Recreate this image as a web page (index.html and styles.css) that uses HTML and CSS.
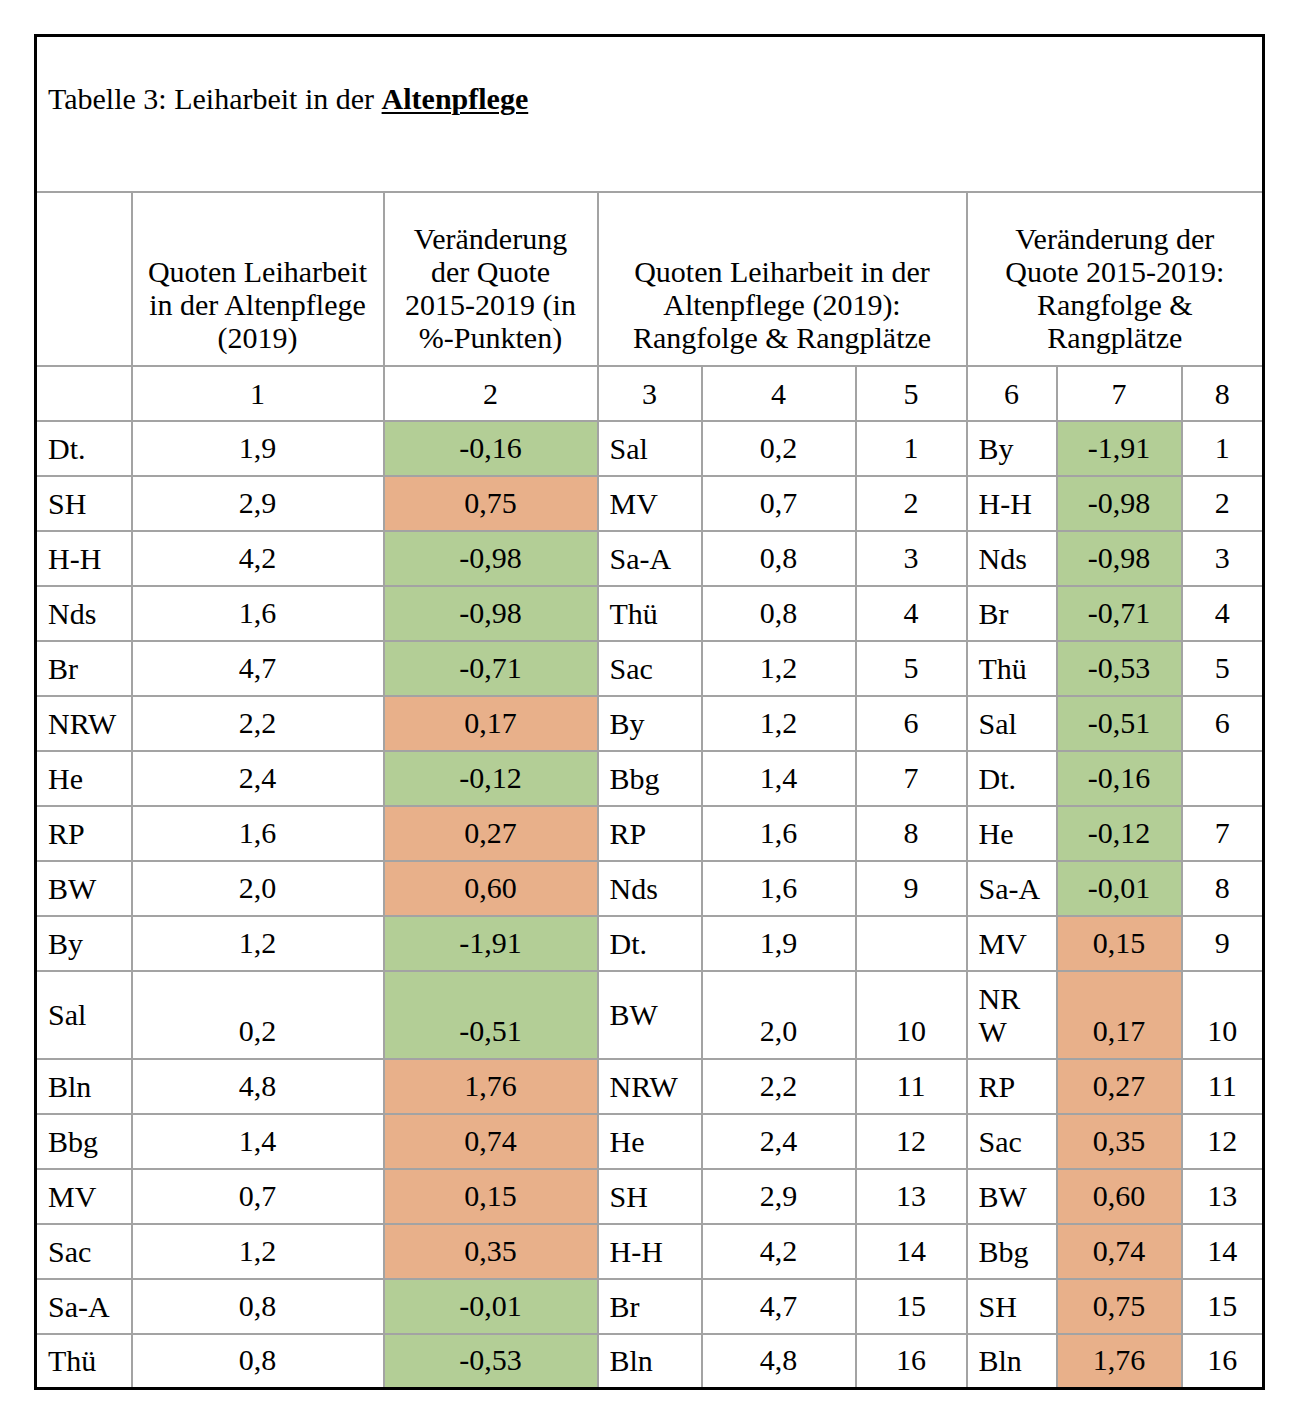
FILE: index.html
```html
<!DOCTYPE html>
<html lang="de">
<head>
<meta charset="utf-8">
<link rel="stylesheet" href="styles.css">
</head>
<body>
<table class="tbl">
<colgroup>
<col class="c0"><col class="c1"><col class="c2"><col class="c3"><col class="c4"><col class="c5"><col class="c6"><col class="c7"><col class="c8">
</colgroup>
<tr class="title-row"><td colspan="9" class="title">Tabelle 3: Leiharbeit in der <b><u>Altenpflege</u></b></td></tr>
<tr class="head-row">
<td></td>
<td class="h">Quoten Leiharbeit<br>in der Altenpflege<br>(2019)</td>
<td class="h">Veränderung<br>der Quote<br>2015-2019 (in<br>%-Punkten)</td>
<td class="h" colspan="3">Quoten Leiharbeit in der<br>Altenpflege (2019):<br>Rangfolge &amp; Rangplätze</td>
<td class="h" colspan="3">Veränderung der<br>Quote 2015-2019:<br>Rangfolge &amp;<br>Rangplätze</td>
</tr>
<tr class="num-row">
<td></td><td>1</td><td>2</td><td>3</td><td>4</td><td>5</td><td>6</td><td>7</td><td>8</td>
</tr>
<tr><td class="l">Dt.</td><td class="n">1,9</td><td class="n g">-0,16</td><td class="l">Sal</td><td class="n">0,2</td><td class="n">1</td><td class="l">By</td><td class="n g">-1,91</td><td class="n">1</td></tr>
<tr><td class="l">SH</td><td class="n">2,9</td><td class="n o">0,75</td><td class="l">MV</td><td class="n">0,7</td><td class="n">2</td><td class="l">H-H</td><td class="n g">-0,98</td><td class="n">2</td></tr>
<tr><td class="l">H-H</td><td class="n">4,2</td><td class="n g">-0,98</td><td class="l">Sa-A</td><td class="n">0,8</td><td class="n">3</td><td class="l">Nds</td><td class="n g">-0,98</td><td class="n">3</td></tr>
<tr><td class="l">Nds</td><td class="n">1,6</td><td class="n g">-0,98</td><td class="l">Thü</td><td class="n">0,8</td><td class="n">4</td><td class="l">Br</td><td class="n g">-0,71</td><td class="n">4</td></tr>
<tr><td class="l">Br</td><td class="n">4,7</td><td class="n g">-0,71</td><td class="l">Sac</td><td class="n">1,2</td><td class="n">5</td><td class="l">Thü</td><td class="n g">-0,53</td><td class="n">5</td></tr>
<tr><td class="l">NRW</td><td class="n">2,2</td><td class="n o">0,17</td><td class="l">By</td><td class="n">1,2</td><td class="n">6</td><td class="l">Sal</td><td class="n g">-0,51</td><td class="n">6</td></tr>
<tr><td class="l">He</td><td class="n">2,4</td><td class="n g">-0,12</td><td class="l">Bbg</td><td class="n">1,4</td><td class="n">7</td><td class="l">Dt.</td><td class="n g">-0,16</td><td class="n"></td></tr>
<tr><td class="l">RP</td><td class="n">1,6</td><td class="n o">0,27</td><td class="l">RP</td><td class="n">1,6</td><td class="n">8</td><td class="l">He</td><td class="n g">-0,12</td><td class="n">7</td></tr>
<tr><td class="l">BW</td><td class="n">2,0</td><td class="n o">0,60</td><td class="l">Nds</td><td class="n">1,6</td><td class="n">9</td><td class="l">Sa-A</td><td class="n g">-0,01</td><td class="n">8</td></tr>
<tr><td class="l">By</td><td class="n">1,2</td><td class="n g">-1,91</td><td class="l">Dt.</td><td class="n">1,9</td><td class="n"></td><td class="l">MV</td><td class="n o">0,15</td><td class="n">9</td></tr>
<tr class="tall"><td class="l">Sal</td><td class="n">0,2</td><td class="n g">-0,51</td><td class="l">BW</td><td class="n">2,0</td><td class="n">10</td><td class="l">NR<br>W</td><td class="n o">0,17</td><td class="n">10</td></tr>
<tr><td class="l">Bln</td><td class="n">4,8</td><td class="n o">1,76</td><td class="l">NRW</td><td class="n">2,2</td><td class="n">11</td><td class="l">RP</td><td class="n o">0,27</td><td class="n">11</td></tr>
<tr><td class="l">Bbg</td><td class="n">1,4</td><td class="n o">0,74</td><td class="l">He</td><td class="n">2,4</td><td class="n">12</td><td class="l">Sac</td><td class="n o">0,35</td><td class="n">12</td></tr>
<tr><td class="l">MV</td><td class="n">0,7</td><td class="n o">0,15</td><td class="l">SH</td><td class="n">2,9</td><td class="n">13</td><td class="l">BW</td><td class="n o">0,60</td><td class="n">13</td></tr>
<tr><td class="l">Sac</td><td class="n">1,2</td><td class="n o">0,35</td><td class="l">H-H</td><td class="n">4,2</td><td class="n">14</td><td class="l">Bbg</td><td class="n o">0,74</td><td class="n">14</td></tr>
<tr><td class="l">Sa-A</td><td class="n">0,8</td><td class="n g">-0,01</td><td class="l">Br</td><td class="n">4,7</td><td class="n">15</td><td class="l">SH</td><td class="n o">0,75</td><td class="n">15</td></tr>
<tr><td class="l">Thü</td><td class="n">0,8</td><td class="n g">-0,53</td><td class="l">Bln</td><td class="n">4,8</td><td class="n">16</td><td class="l">Bln</td><td class="n o">1,76</td><td class="n">16</td></tr>
</table>
</body>
</html>
```
FILE: styles.css
```css
html, body {
  background: #ffffff;
}
body {
  margin: 34px 0 0 34px;
  font-family: "Liberation Serif", "Times New Roman", serif;
  font-size: 30px;
  line-height: 33px;
  color: #000;
}
.tbl {
  border-collapse: collapse;
  table-layout: fixed;
  width: 1230px;
  border: 3px solid #000;
}
.c0 { width: 96px; }
.c1 { width: 252px; }
.c2 { width: 214px; }
.c3 { width: 104px; }
.c4 { width: 154px; }
.c5 { width: 111px; }
.c6 { width: 90px; }
.c7 { width: 125px; }
.c8 { width: 82px; }
.tbl td {
  border: 2px solid #a3a3a3;
  padding: 0 11px;
  height: 55px;
  box-sizing: border-box;
}
.title-row td.title {
  height: 156px;
  vertical-align: top;
  padding-top: 45px;
  text-align: left;
  border-top: 3px solid #000;
  border-left: 3px solid #000;
  border-right: 3px solid #000;
}
.title u {
  text-decoration-thickness: 2px;
  text-underline-offset: 3px;
}
.head-row td {
  height: 174px;
  vertical-align: bottom;
  padding-bottom: 11px;
}
.head-row td.h {
  text-align: center;
}
.num-row td {
  height: 55px;
  text-align: center;
  vertical-align: middle;
}
.tbl td.l {
  text-align: left;
  vertical-align: middle;
}
.tbl td.n {
  text-align: center;
  vertical-align: bottom;
  padding-bottom: 11px;
}
.tbl tr.tall td {
  height: 88px;
}
.tbl td.g {
  background: #b3ce96;
}
.tbl td.o {
  background: #e8b08a;
}
```
